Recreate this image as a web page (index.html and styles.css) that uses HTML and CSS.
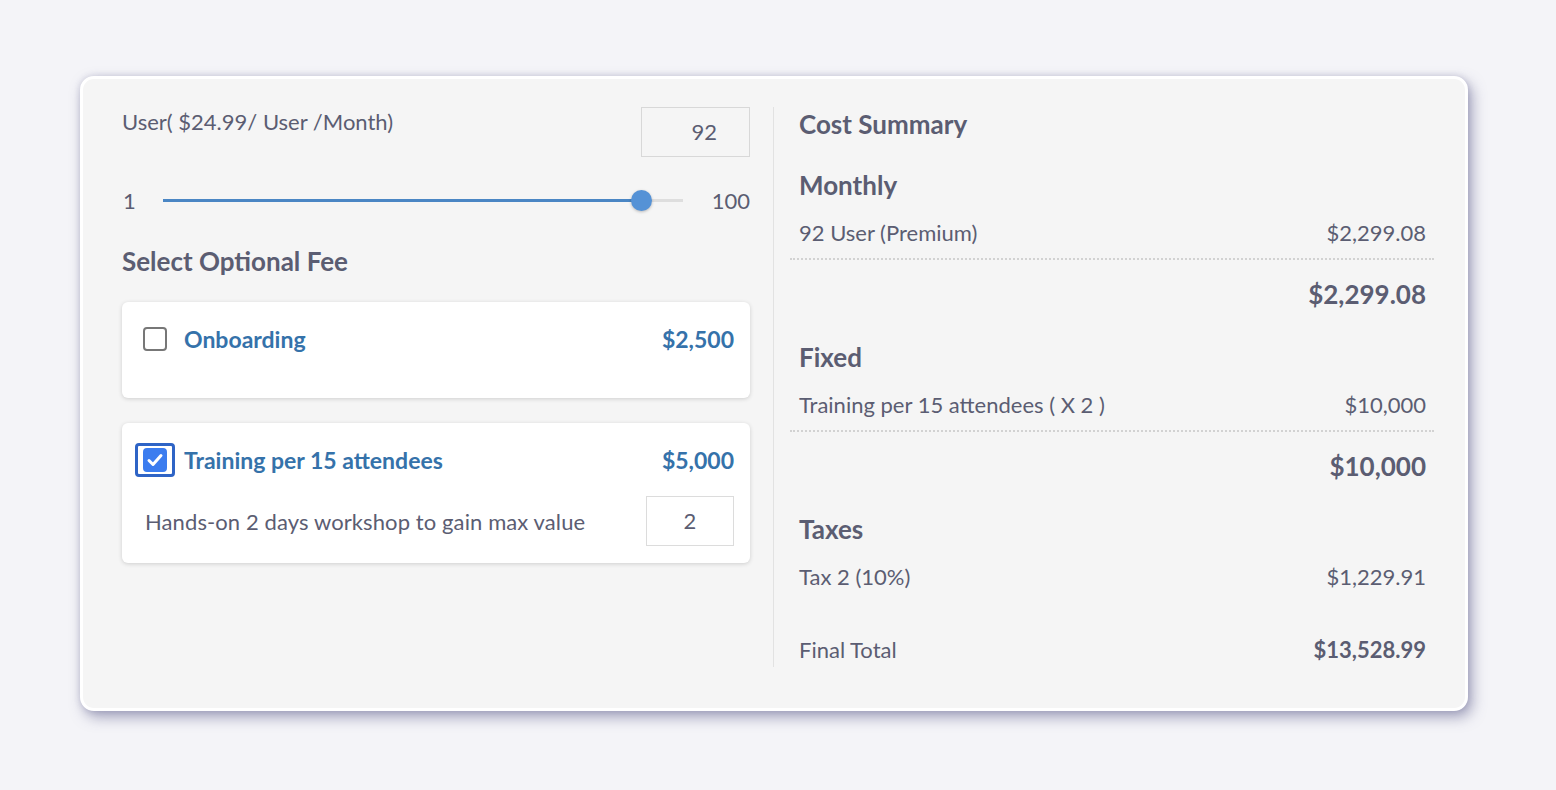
FILE: index.html
```html
<!DOCTYPE html>
<html lang="en">
<head>
    <meta charset="UTF-8">
    <meta name="viewport" content="width=device-width, initial-scale=1.0">
    <title>Pricing Calculator</title>
    <link rel="stylesheet" href="styles.css">
</head>
<body>
    <div class="calc">
        <div class="left">
            <div class="user-head">
                <p class="user-label">User( $24.99/ User /Month)</p>
                <div class="num-box">92</div>
            </div>
            <div class="slider-row">
                <span>1</span>
                <div class="track">
                    <div class="fill" style="width: 92%"></div>
                    <span class="thumb" style="left: 92%"></span>
                </div>
                <span>100</span>
            </div>
            <h3 class="fee-title">Select Optional Fee</h3>
            <div class="fee">
                <div class="fee-head">
                    <span class="check"></span>
                    <span class="fee-name">Onboarding</span>
                    <span class="fee-price">$2,500</span>
                </div>
            </div>
            <div class="fee fee2">
                <div class="fee-head">
                    <span class="check on">
                        <svg width="20" height="20" viewBox="0 0 20 20"><path d="M4 10.5l4 4 8-9" fill="none" stroke="#fff" stroke-width="3" stroke-linecap="round" stroke-linejoin="round"/></svg>
                    </span>
                    <span class="fee-name">Training per 15 attendees</span>
                    <span class="fee-price">$5,000</span>
                </div>
                <div class="fee-desc">
                    <span>Hands-on 2 days workshop to gain max value</span>
                    <div class="qty-box">2</div>
                </div>
            </div>
        </div>
        <div class="right">
            <h3 class="sum-title">Cost Summary</h3>

            <div class="group">
                <h3>Monthly</h3>
                <div class="row line">
                    <span>92 User (Premium)</span>
                    <span>$2,299.08</span>
                </div>
                <div class="subtotal">$2,299.08</div>
            </div>

            <div class="group">
                <h3>Fixed</h3>
                <div class="row line">
                    <span>Training per 15 attendees ( X 2 )</span>
                    <span>$10,000</span>
                </div>
                <div class="subtotal">$10,000</div>
            </div>

            <div class="group">
                <h3>Taxes</h3>
                <div class="row">
                    <span>Tax 2 (10%)</span>
                    <span>$1,229.91</span>
                </div>
            </div>

            <div class="row total">
                <span>Final Total</span>
                <b>$13,528.99</b>
            </div>
        </div>
    </div>
</body>
</html>
```

FILE: styles.css
```css
*{
    margin: 0;
    padding: 0;
    box-sizing: border-box;
}
html{
    background-color: #f4f4f8;
}
body{
    min-height: 790px;
    font-family: Lato, "Noto Sans", sans-serif;
    color: #5b5d72;
    padding: 76px 0 0 80px;
}
h3{
    font-weight: 700;
}

.calc{
    width: 1388px;
    height: 635px;
    background-color: #f5f5f5;
    border: 3px solid #fff;
    border-radius: 14px;
    box-shadow: 4px 6px 14px rgba(80, 80, 130, 0.5), 0 0 6px rgba(80, 80, 130, 0.18);
    display: flex;
    padding: 28px 0 41px 39px;
}

/* left side */
.left{
    width: 628px;
    margin-right: 23px;
    flex-shrink: 0;
}
.user-head{
    display: flex;
    justify-content: space-between;
    align-items: flex-start;
}
.user-label{
    font-size: 22px;
    line-height: 26px;
    margin-top: 2px;
}
.num-box{
    width: 109px;
    height: 50px;
    border: 1px solid #d8d8d8;
    font-size: 22px;
    line-height: 48px;
    text-align: right;
    padding-right: 32px;
}
.slider-row{
    display: flex;
    align-items: center;
    height: 20px;
    margin-top: 33px;
    font-size: 22px;
}
.slider-row span:first-child{
    padding-left: 1px;
}
.track{
    flex: 1;
    height: 3px;
    background-color: #dedede;
    margin: 0 29px 0 27px;
    position: relative;
}
.fill{
    height: 3px;
    background-color: #4a86c4;
}
.thumb{
    position: absolute;
    top: -9px;
    width: 21px;
    height: 21px;
    margin-left: -10px;
    border-radius: 50%;
    background-color: #5592d6;
    box-shadow: 0 1px 3px rgba(0, 0, 0, 0.25);
}
.fee-title{
    font-size: 26px;
    line-height: 30px;
    margin-top: 36px;
}

.fee{
    background-color: #fff;
    border-radius: 6px;
    box-shadow: 0 1px 4px rgba(0, 0, 0, 0.16);
    margin-top: 26px;
    padding: 22px 16px 44px 21px;
}
.fee2{
    margin-top: 25px;
    padding-bottom: 17px;
}
.fee-head{
    display: flex;
    align-items: center;
    height: 30px;
}
.check{
    width: 24px;
    height: 24px;
    border: 2px solid #777;
    border-radius: 4px;
    margin-right: 17px;
    display: flex;
    align-items: center;
    justify-content: center;
    position: relative;
}
.check.on{
    background-color: #3b7cef;
    border-color: #3b7cef;
}
.check.on::after{
    content: "";
    position: absolute;
    top: -7px;
    left: -10px;
    right: -10px;
    bottom: -7px;
    border: 3px solid #2e64c6;
    border-radius: 4px;
}
.fee-name{
    flex: 1;
    font-size: 23px;
    font-weight: 700;
    color: #3572aa;
}
.fee-price{
    font-size: 23px;
    font-weight: 700;
    color: #3572aa;
}
.fee-desc{
    display: flex;
    justify-content: space-between;
    align-items: center;
    margin-top: 21px;
    padding-left: 2px;
    font-size: 22px;
    letter-spacing: 0.1px;
}
.qty-box{
    width: 88px;
    height: 50px;
    border: 1px solid #dcdcdc;
    text-align: center;
    line-height: 48px;
}

/* right side */
.right{
    flex: 1;
    border-left: 1px solid #e2e2e2;
    padding: 0 39px 0 25px;
}
.sum-title{
    font-size: 26px;
    line-height: 34px;
}
.group{
    margin-top: 31px;
}
.group:first-of-type{
    margin-top: 27px;
}
.group h3{
    font-size: 26px;
    line-height: 34px;
    margin-bottom: 17px;
}
.row{
    display: flex;
    justify-content: space-between;
    font-size: 22px;
    line-height: 28px;
}
.row.line{
    margin: 0 -8px 0 -9px;
    padding: 0 8px 11px 9px;
    border-bottom: 2px dotted #d2d2d2;
}
.subtotal{
    text-align: right;
    font-size: 26px;
    font-weight: 700;
    line-height: 30px;
    margin-top: 19px;
}
.total{
    margin-top: 45px;
}
.total b{
    font-weight: 700;
}
```
